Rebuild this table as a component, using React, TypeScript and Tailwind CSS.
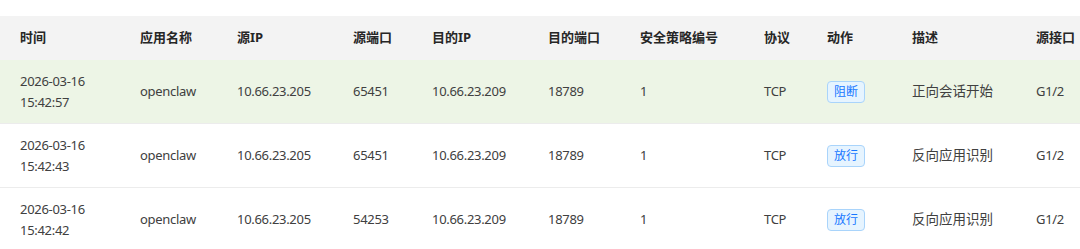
import React from "react";

type Row = {
  date: string;
  time: string;
  app: string;
  srcIp: string;
  srcPort: string;
  dstIp: string;
  dstPort: string;
  policy: string;
  proto: string;
  action: string;
  desc: string;
  iface: string;
  highlight?: boolean;
};

const rows: Row[] = [
  {
    date: "2026-03-16",
    time: "15:42:57",
    app: "openclaw",
    srcIp: "10.66.23.205",
    srcPort: "65451",
    dstIp: "10.66.23.209",
    dstPort: "18789",
    policy: "1",
    proto: "TCP",
    action: "阻断",
    desc: "正向会话开始",
    iface: "G1/2",
    highlight: true,
  },
  {
    date: "2026-03-16",
    time: "15:42:43",
    app: "openclaw",
    srcIp: "10.66.23.205",
    srcPort: "65451",
    dstIp: "10.66.23.209",
    dstPort: "18789",
    policy: "1",
    proto: "TCP",
    action: "放行",
    desc: "反向应用识别",
    iface: "G1/2",
  },
  {
    date: "2026-03-16",
    time: "15:42:42",
    app: "openclaw",
    srcIp: "10.66.23.205",
    srcPort: "54253",
    dstIp: "10.66.23.209",
    dstPort: "18789",
    policy: "1",
    proto: "TCP",
    action: "放行",
    desc: "反向应用识别",
    iface: "G1/2",
  },
];

const headers = ["时间", "应用名称", "源IP", "源端口", "目的IP", "目的端口", "安全策略编号", "协议", "动作", "描述", "源接口"];

const cols = "grid grid-cols-[120px_97px_116px_79px_116px_92px_124px_63px_85px_124px_1fr]";

export default function App() {
  return (
    <div
      className="w-[1080px] h-[249px] overflow-hidden bg-white pt-4 text-[13px] text-[#404040]"
      style={{ fontFamily: '"Noto Sans", "Noto Sans CJK SC", sans-serif' }}
    >
      <div className={`${cols} h-11 items-center bg-[#f3f3f3] font-bold text-[#262626]`}>
        {headers.map((h) => (
          <div key={h} className="pl-5 whitespace-nowrap">
            {h}
          </div>
        ))}
      </div>
      {rows.map((r, i) => (
        <div
          key={i}
          className={`${cols} h-16 items-center border-b border-[#ececec] tracking-[-0.3px] ${r.highlight ? "bg-[#edf5e6]" : "bg-white"}`}
        >
          <div className="pl-5 leading-[21px]">
            <div>{r.date}</div>
            <div>{r.time}</div>
          </div>
          <div className="pl-5">{r.app}</div>
          <div className="pl-5">{r.srcIp}</div>
          <div className="pl-5">{r.srcPort}</div>
          <div className="pl-5">{r.dstIp}</div>
          <div className="pl-5">{r.dstPort}</div>
          <div className="pl-5">{r.policy}</div>
          <div className="pl-5">{r.proto}</div>
          <div className="pl-5 tracking-normal">
            <span className="inline-flex h-[22px] items-center rounded border border-[#a9d4fb] bg-[#e6f4ff] px-[6px] text-[12px] text-[#1677ff]">
              {r.action}
            </span>
          </div>
          <div className="pl-5 whitespace-nowrap tracking-normal text-[13.5px]">{r.desc}</div>
          <div className="pl-5">{r.iface}</div>
        </div>
      ))}
    </div>
  );
}
